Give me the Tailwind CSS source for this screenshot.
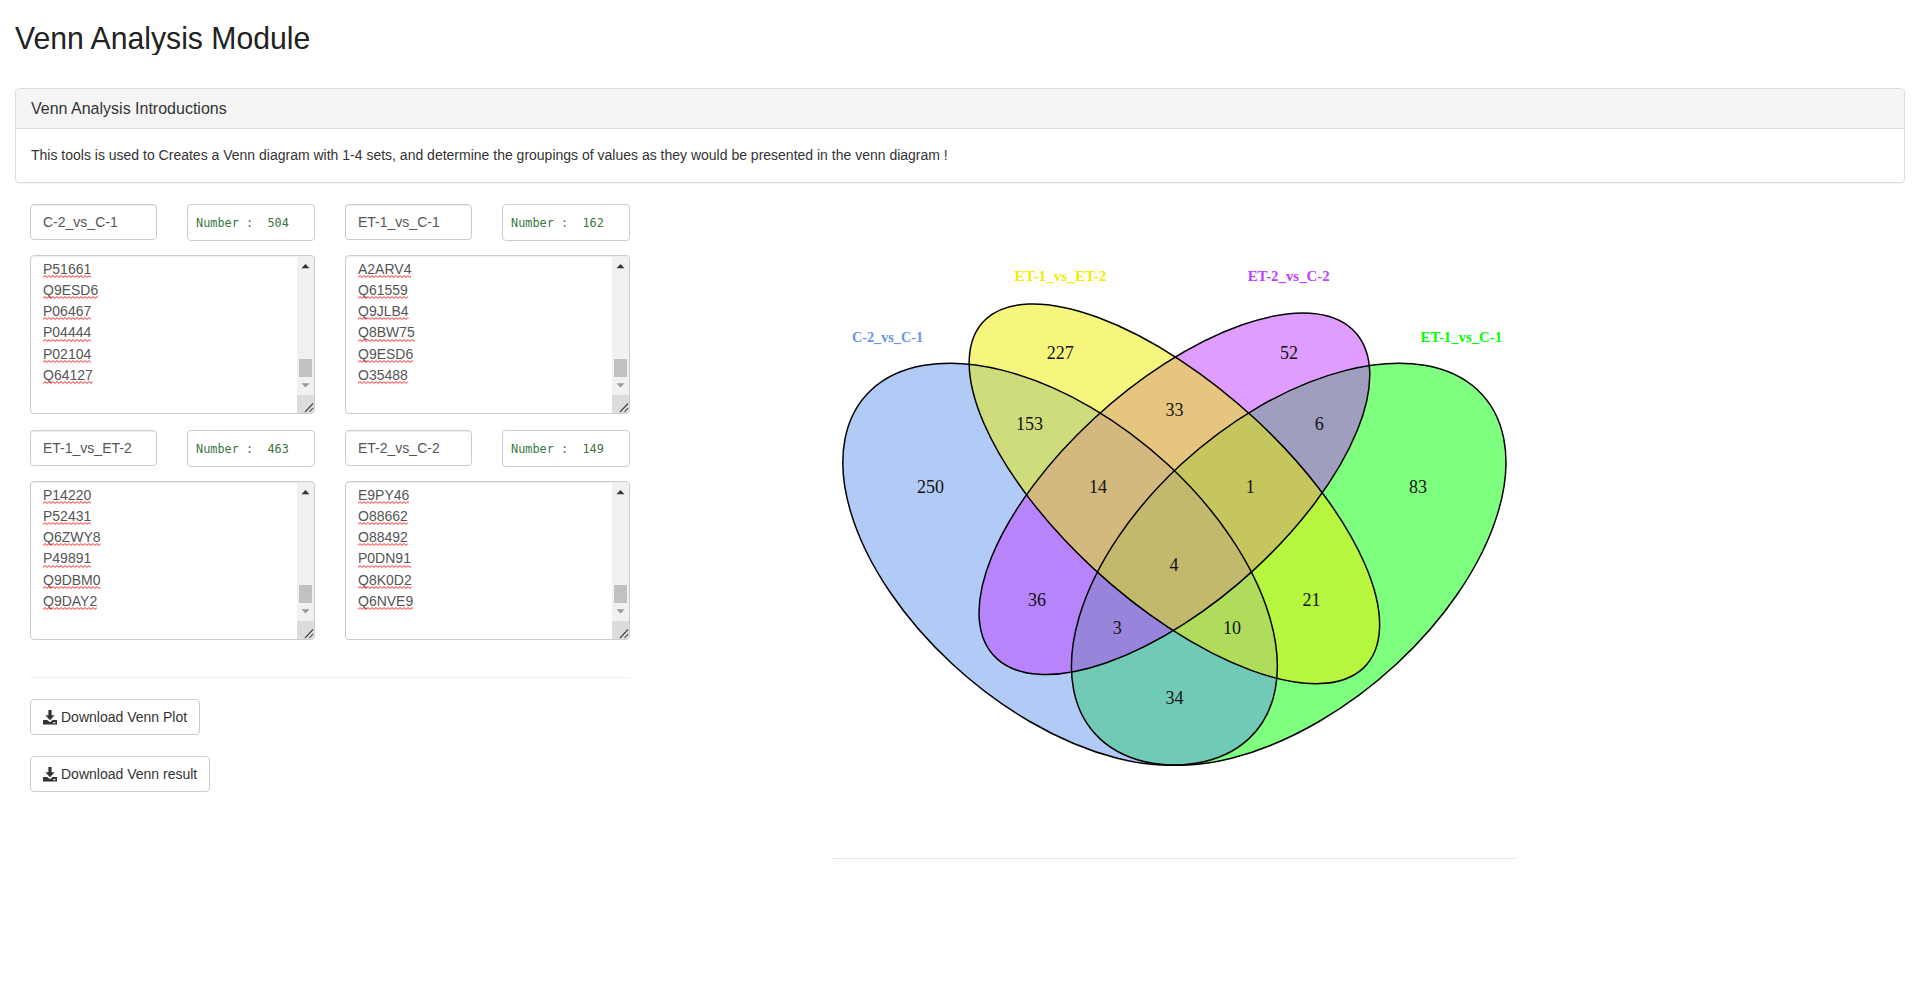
<!DOCTYPE html>
<html lang="en">
<head>
<meta charset="utf-8">
<title>Venn Analysis Module</title>
<script src="https://cdn.jsdelivr.net/npm/@tailwindcss/browser@4"></script>
</head>
<body class="bg-white font-['Liberation_Sans',Arial,sans-serif] text-[14px] text-[#333]">
<main class="h-[990px] w-[1920px] overflow-hidden px-[15px] pt-[15px]">
  <h1 class="h-[73px] text-[30.2px] leading-[46px] text-[#222]"><span class="inline-block origin-center scale-y-[1.06]">Venn Analysis Module</span></h1>

  <section class="h-[95px] w-[1890px] rounded-[4px] border border-[#ddd] shadow-[0_1px_1px_rgba(0,0,0,0.05)]">
    <h2 class="h-[40px] rounded-t-[3px] border-b border-[#ddd] bg-[#f5f5f5] px-[15px] text-[16px] leading-[39px]"><span class="inline-block scale-y-[1.06]">Venn Analysis Introductions</span></h2>
    <p class="px-[15px] leading-[53px]"><span class="inline-block scale-y-[1.06]">This tools is used to Creates a Venn diagram with 1-4 sets, and determine the groupings of values as they would be presented in the venn diagram !</span></p>
  </section>

  <div class="flex">
    <aside class="w-[615px] pl-[15px] pt-[21px]">
      <div id="sets" class="grid grid-cols-[285px_285px] gap-x-[30px] gap-y-[16px]"></div>
      <hr class="mt-[37px] w-[600px] border-t border-[#eee]">
      <div class="mt-[21px] flex flex-col items-start gap-[21px]">
        <button class="flex h-[36px] w-[170px] items-center rounded-[4px] border border-[#ccc] pl-[12px]">
          <svg class="mr-[4px] h-[15px] w-[14px]" viewBox="0 0 14 15" fill="#333"><path d="M5.400 0h3.200v5.200h3L7 10.200 2.400 5.200h3z"/><path fill-rule="evenodd" d="M0 10h4.300L7 12.200 9.700 10H14v4.600H0zM10 12.300h2.600v1H10z"/></svg>
          <span class="inline-block scale-y-[1.06] whitespace-nowrap">Download Venn Plot</span>
        </button>
        <button class="flex h-[36px] w-[180px] items-center rounded-[4px] border border-[#ccc] pl-[12px]">
          <svg class="mr-[4px] h-[15px] w-[14px]" viewBox="0 0 14 15" fill="#333"><path d="M5.400 0h3.200v5.200h3L7 10.200 2.400 5.200h3z"/><path fill-rule="evenodd" d="M0 10h4.300L7 12.200 9.700 10H14v4.600H0zM10 12.300h2.600v1H10z"/></svg>
          <span class="inline-block scale-y-[1.06] whitespace-nowrap">Download Venn result</span>
        </button>
      </div>
    </aside>

    <section class="ml-[203px] w-[683px]">
      <svg class="block h-[675px] w-[683px]" viewBox="833 183 683 675">
        <defs>
          <pattern id="squiggle" width="4" height="3" patternUnits="userSpaceOnUse"><path d="M-1 1.500 0 2.400 2 .6 4 2.400 5 1.500" fill="none" stroke="#ff2a2a" stroke-width="1"/></pattern>
          <ellipse id="e-green" rx=".35" ry=".2" transform="matrix(762.2 0 0 705.2 1288.7 564.3) rotate(-45)" vector-effect="non-scaling-stroke"/>
          <ellipse id="e-blue" rx=".35" ry=".2" transform="matrix(762.2 0 0 705.2 1060.1 564.3) rotate(45)" vector-effect="non-scaling-stroke"/>
          <ellipse id="e-purple" rx=".33" ry=".15" transform="matrix(762.2 0 0 705.2 1174.4 493.8) rotate(-45)" vector-effect="non-scaling-stroke"/>
          <ellipse id="e-yellow" rx=".35" ry=".15" transform="matrix(762.2 0 0 705.2 1174.4 493.8) rotate(45)" vector-effect="non-scaling-stroke"/>
        </defs>
        <g fill-opacity=".5">
          <use href="#e-green" fill="#00ff00"/>
          <use href="#e-blue" fill="#6495ed"/>
          <use href="#e-purple" fill="#bf3eff"/>
          <use href="#e-yellow" fill="#eeee00"/>
        </g>
        <g fill="none" stroke="#000" stroke-width="1.5">
          <use href="#e-green"/><use href="#e-blue"/><use href="#e-purple"/><use href="#e-yellow"/>
        </g>
        <g class="font-['Liberation_Serif',serif]" font-size="18" fill="#111" text-anchor="middle">
          <text x="1060.300" y="359">227</text>
          <text x="1289" y="359">52</text>
          <text x="1174.500" y="416">33</text>
          <text x="1029.500" y="430">153</text>
          <text x="1319.300" y="430">6</text>
          <text x="930.500" y="493">250</text>
          <text x="1098" y="493">14</text>
          <text x="1250.300" y="493">1</text>
          <text x="1418" y="493">83</text>
          <text x="1174" y="571">4</text>
          <text x="1037" y="606">36</text>
          <text x="1311.500" y="606">21</text>
          <text x="1117.300" y="634">3</text>
          <text x="1232" y="634">10</text>
          <text x="1174.500" y="704">34</text>
        </g>
        <g class="font-['Liberation_Serif',serif]" font-size="14.7" font-weight="bold" text-anchor="middle" lengthAdjust="spacingAndGlyphs">
          <text x="887.500" y="341.500" fill="#6495ed" textLength="71" lengthAdjust="spacingAndGlyphs">C-2_vs_C-1</text>
          <text x="1060.500" y="281" fill="#eeee00" textLength="92" lengthAdjust="spacingAndGlyphs">ET-1_vs_ET-2</text>
          <text x="1288.700" y="281" fill="#bf3eff" textLength="82" lengthAdjust="spacingAndGlyphs">ET-2_vs_C-2</text>
          <text x="1461.300" y="341.500" fill="#00ff00" textLength="81.500" lengthAdjust="spacingAndGlyphs">ET-1_vs_C-1</text>
        </g>
      </svg>
      <hr class="border-t border-[#e6e6e6]">
    </section>
  </div>
</main>

<template id="set-card">
  <div>
    <div class="flex items-start justify-between">
      <div class="h-[36px] w-[127px] rounded-[4px] border border-[#ccc] pl-[12px] leading-[34px] text-[#555] shadow-[inset_0_1px_1px_rgba(0,0,0,0.075)]"><span data-name class="inline-block scale-y-[1.06]"></span></div>
      <div class="h-[37px] w-[128px] rounded-[4px] border border-[#ccc] pl-[8px] font-['DejaVu_Sans_Mono',monospace] text-[11.87px] leading-[36px] text-[#3c763d]"><span data-count class="whitespace-pre"></span></div>
    </div>
    <div class="mt-[14px] flex h-[159px] justify-between overflow-hidden rounded-[4px] border border-[#ccc] shadow-[inset_0_1px_1px_rgba(0,0,0,0.075)]">
      <div data-ids class="pl-[12px] pt-[3px] leading-[21.15px] text-[#555]"></div>
      <div class="mt-px flex w-[17px] flex-col bg-[#f1f1f1]">
        <svg class="h-[138px] w-[17px]" viewBox="0 0 17 138"><path d="M4.500 11.200 8.500 7l4 4.200z" fill="#333"/><path fill="#c1c1c1" d="M2 102h13v18H2z"/><path d="M4.500 126.200h8l-4 4.300z" fill="#999"/></svg>
        <svg class="h-[18px] w-[17px] bg-[#dcdcdc]" viewBox="0 0 17 18"><path d="M8 17 16 8.500M12.500 17l3.500-4" stroke="#444" stroke-width="1.100" fill="none"/></svg>
      </div>
    </div>
  </div>
</template>
<template id="id-row"><div class="relative h-[21.15px] w-fit"><span class="block scale-y-[1.06]"></span><svg class="absolute bottom-[2px] left-0 h-[3px] w-full"><rect width="100%" height="3" fill="url(#squiggle)"/></svg></div></template>
<script>
const sets = [
  ['C-2_vs_C-1', 504, ['P51661','Q9ESD6','P06467','P04444','P02104','Q64127']],
  ['ET-1_vs_C-1', 162, ['A2ARV4','Q61559','Q9JLB4','Q8BW75','Q9ESD6','O35488']],
  ['ET-1_vs_ET-2', 463, ['P14220','P52431','Q6ZWY8','P49891','Q9DBM0','Q9DAY2']],
  ['ET-2_vs_C-2', 149, ['E9PY46','O88662','O88492','P0DN91','Q8K0D2','Q6NVE9']]
];
const card = document.getElementById('set-card'), row = document.getElementById('id-row');
for (const [name, count, ids] of sets) {
  const c = card.content.cloneNode(true);
  c.querySelector('[data-name]').textContent = name;
  c.querySelector('[data-count]').textContent = 'Number :  ' + count;
  for (const id of ids) {
    const r = row.content.cloneNode(true);
    r.querySelector('span').textContent = id;
    c.querySelector('[data-ids]').append(r);
  }
  document.getElementById('sets').append(c);
}
</script>
</body>
</html>
